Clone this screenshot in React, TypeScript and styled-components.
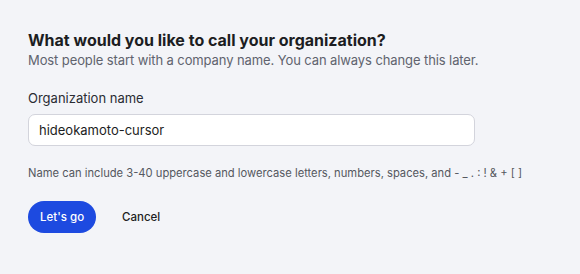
import React from "react";
import styled, { createGlobalStyle } from "styled-components";

const Global = createGlobalStyle`
  html, body { margin: 0; padding: 0; background: #f3f4f8; }
  body { font-family: Inter, "Noto Sans", sans-serif; -webkit-font-smoothing: antialiased; }
  * { box-sizing: border-box; }
`;

const Page = styled.div`
  width: 580px;
  height: 274px;
  padding: 29px 28px 0 28px;
  display: flex;
  flex-direction: column;
`;

const Title = styled.h1`
  margin: 0;
  font-size: 16px;
  line-height: 22px;
  font-weight: 700;
  color: #1c1d22;
`;

const Subtitle = styled.p`
  margin: 0;
  font-size: 13px;
  line-height: 18px;
  letter-spacing: -0.1px;
  color: #60636e;
`;

const Field = styled.div`
  margin-top: 20px;
  display: flex;
  flex-direction: column;
  gap: 7px;
  width: 447px;
`;

const Label = styled.label`
  font-size: 13px;
  line-height: 18px;
  color: #2a2c33;
  font-weight: 400;
`;

const Input = styled.input`
  height: 32px;
  border: 1px solid #d3d4dc;
  border-radius: 7px;
  background: #ffffff;
  padding: 0 10px;
  font-family: inherit;
  font-size: 13px;
  color: #1c1d22;
  outline: none;
`;

const Help = styled.p`
  margin: 19px 0 0;
  font-size: 11.2px;
  line-height: 16px;
  color: #55585f;
`;

const Actions = styled.div`
  margin-top: 20px;
  display: flex;
  align-items: center;
  gap: 14px;
`;

const Button = styled.button<{ $primary?: boolean }>`
  height: 32px;
  padding: 0 12px;
  border: none;
  border-radius: 16px;
  font-family: inherit;
  font-size: 11.5px;
  font-weight: 500;
  cursor: pointer;
  background: ${(p) => (p.$primary ? "#1d4ae0" : "transparent")};
  color: ${(p) => (p.$primary ? "#ffffff" : "#1c1d22")};
`;

export default function App() {
  return (
    <>
      <Global />
      <Page>
        <Title>What would you like to call your organization?</Title>
        <Subtitle>Most people start with a company name. You can always change this later.</Subtitle>
        <Field>
          <Label htmlFor="org">Organization name</Label>
          <Input id="org" defaultValue="hideokamoto-cursor" spellCheck={false} />
        </Field>
        <Help>Name can include 3-40 uppercase and lowercase letters, numbers, spaces, and - _ . : ! &amp; + [ ]</Help>
        <Actions>
          <Button $primary>Let's go</Button>
          <Button>Cancel</Button>
        </Actions>
      </Page>
    </>
  );
}
